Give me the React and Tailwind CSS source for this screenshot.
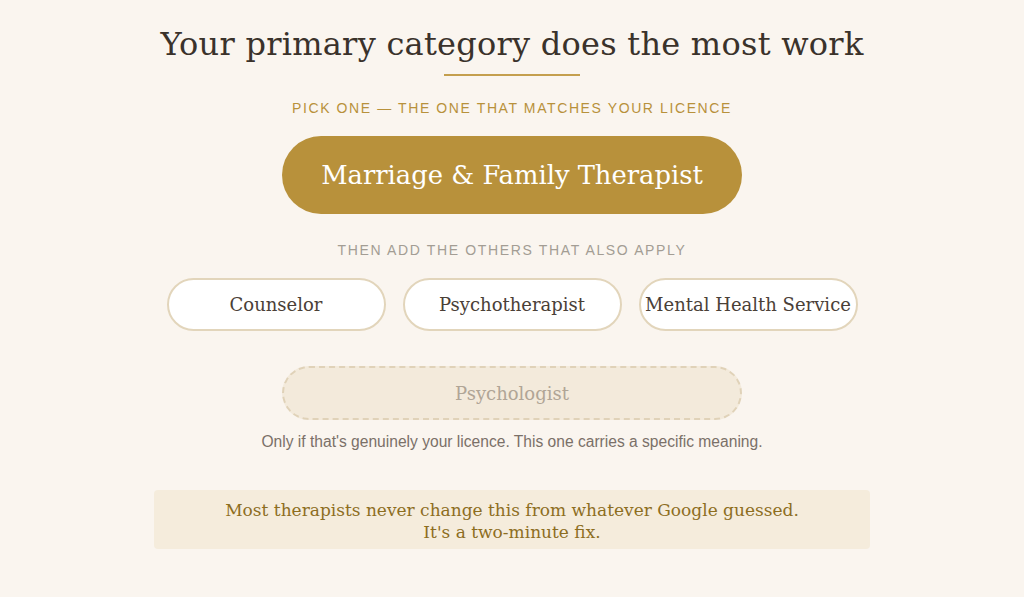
export default function App() {
  const others = ["Counselor", "Psychotherapist", "Mental Health Service"];
  return (
    <div className="min-h-[597px] bg-[#faf5ef] font-['DejaVu_Serif',serif] text-[#3a322b]">
      <div className="mx-auto flex w-[716px] flex-col items-center pt-[22px]">
        <h1 className="whitespace-nowrap text-[32px] leading-[44px] tracking-[0.25px]">Your primary category does the most work</h1>
        <div className="mt-[8px] h-[2px] w-[136px] bg-[#c49f4e]" />
        <div className="mt-[22px] font-['Liberation_Sans',sans-serif] text-[14px] tracking-[1.6px] text-[#b8913b]">
          PICK ONE — THE ONE THAT MATCHES YOUR LICENCE
        </div>
        <button className="mt-[17px] h-[78px] w-[460px] rounded-full bg-[#b8913b] text-[25.8px] text-white">
          Marriage &amp; Family Therapist
        </button>
        <div className="mt-[26px] font-['Liberation_Sans',sans-serif] text-[14px] tracking-[1.65px] text-[#a39d94]">
          THEN ADD THE OTHERS THAT ALSO APPLY
        </div>
        <div className="mt-[17px] flex gap-[17px]">
          {others.map((o) => (
            <button
              key={o}
              className="h-[53px] w-[219px] rounded-full border-2 border-[#e2d5bb] bg-white text-[18px] text-[#4a4037]"
            >
              {o}
            </button>
          ))}
        </div>
        <button className="mt-[35px] h-[54px] w-[460px] rounded-full border-2 border-dashed border-[#e0d2b8] bg-[#f3eadb] text-[18px] text-[#b0a596]">
          Psychologist
        </button>
        <p className="mt-[10px] font-['Liberation_Sans',sans-serif] text-[15.6px] text-[#7a7068]">
          Only if that's genuinely your licence. This one carries a specific meaning.
        </p>
        <div className="mt-[37px] w-full rounded-[4px] bg-[#f5ecdc] pb-[6px] pt-[9px] text-center text-[17px] leading-[22px] text-[#8d6e1f]">
          Most therapists never change this from whatever Google guessed.
          <br />
          It's a two-minute fix.
        </div>
      </div>
    </div>
  );
}
